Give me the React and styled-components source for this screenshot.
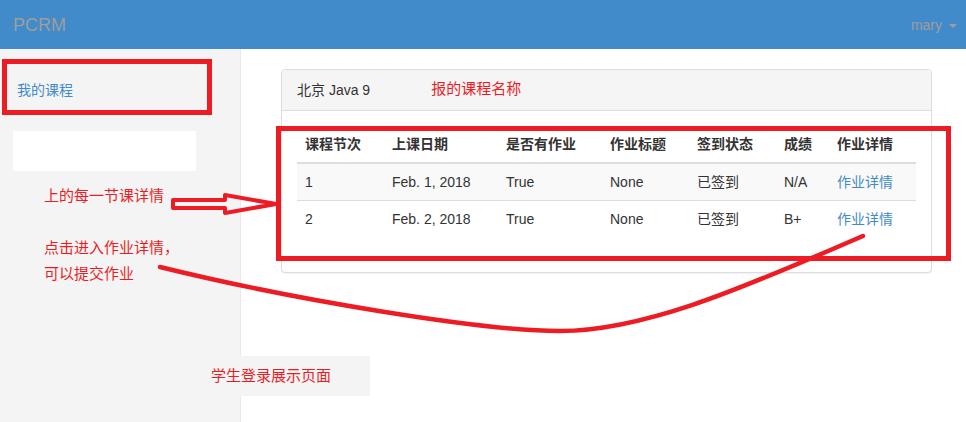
import React from "react"
import styled, { createGlobalStyle } from "styled-components"

const GlobalStyle = createGlobalStyle`
  html, body {
    margin: 0;
    padding: 0;
    background: #fff;
    font-family: "Liberation Sans", "Noto Sans CJK SC", sans-serif;
    font-size: 14px;
    line-height: 20px;
    color: #333;
  }
`

const Page = styled.div`
  position: relative;
  width: 100%;
  height: 100vh;
  min-height: 422px;
  display: flex;
  flex-direction: column;
  overflow: hidden;
`

const Navbar = styled.nav`
  height: 49px;
  flex-shrink: 0;
  background-color: #428bca;
  display: flex;
  align-items: center;
  justify-content: space-between;
  padding: 0 9px 0 13px;
`

const Brand = styled.span`
  font-size: 18px;
  color: #9d9d9d;
`

const UserMenu = styled.span`
  display: flex;
  align-items: center;
  gap: 7px;
  color: #9d9d9d;
  font-size: 14px;
`

const Caret = styled.span`
  width: 0;
  height: 0;
  border-left: 4px solid transparent;
  border-right: 4px solid transparent;
  border-top: 4px solid #9d9d9d;
  margin-top: 2px;
`

const Body = styled.div`
  flex: 1;
  display: flex;
`

const Sidebar = styled.aside`
  width: 240px;
  flex-shrink: 0;
  background: #f4f4f4;
  border-right: 1px solid #eaeaea;
  padding-top: 20px;
`

const NavItem = styled.a`
  display: block;
  padding: 11px 17px;
  color: #428bca;
  text-decoration: none;
  font-size: 14px;
`

const BlankBox = styled.div`
  margin: 20px 0 0 13px;
  width: 183px;
  height: 40px;
  background: #fff;
`

const Notes = styled.div`
  margin: 12px 0 0 44px;
  display: flex;
  flex-direction: column;
`

const Note = styled.div`
  color: #ed1c24;
  font-size: 15px;
  line-height: 26px;
  margin-top: ${p => p.top || 0}px;
`

const Main = styled.main`
  flex: 1;
  min-width: 0;
  padding: 20px 34px 0 40px;
`

const Panel = styled.section`
  border: 1px solid #ddd;
  border-radius: 4px;
  background: #fff;
  box-shadow: 0 1px 1px rgba(0, 0, 0, 0.05);
`

const PanelHeading = styled.div`
  display: flex;
  align-items: center;
  padding: 10px 15px;
  background: #f5f5f5;
  border-bottom: 1px solid #ddd;
  border-radius: 3px 3px 0 0;
`

const HeadingNote = styled.span`
  color: #ed1c24;
  font-size: 15px;
  margin: -3px 0 0 61px;
`

const PanelBody = styled.div`
  padding: 15px;
`

const Table = styled.table`
  width: 100%;
  table-layout: fixed;
  border-collapse: collapse;
  margin-bottom: 20px;
`

const Th = styled.th`
  text-align: left;
  font-weight: bold;
  padding: 8px;
  border-bottom: 2px solid #ddd;
  width: ${p => p.w - 16}px;
  white-space: nowrap;
`

const Tr = styled.tr`
  background: ${p => (p.striped ? "#f9f9f9" : "#fff")};
`

const Td = styled.td`
  padding: 8px;
  border-top: 1px solid #ddd;
  white-space: nowrap;
`

const DetailLink = styled.a`
  color: #428bca;
  text-decoration: none;
`

const PageLabel = styled.div`
  position: absolute;
  left: 200px;
  top: 356px;
  width: 159px;
  height: 40px;
  padding-left: 11px;
  line-height: 40px;
  background: #f4f4f4;
  color: #ed1c24;
  font-size: 15px;
`

const Overlay = styled.svg`
  position: absolute;
  left: 0;
  top: 0;
  pointer-events: none;
`

const columns = [
  { title: "课程节次", w: 87 },
  { title: "上课日期", w: 114 },
  { title: "是否有作业", w: 104 },
  { title: "作业标题", w: 87 },
  { title: "签到状态", w: 87 },
  { title: "成绩", w: 53 },
  { title: "作业详情", w: 87 },
]

const records = [
  { no: 1, date: "Feb. 1, 2018", hw: "True", title: "None", sign: "已签到", score: "N/A" },
  { no: 2, date: "Feb. 2, 2018", hw: "True", title: "None", sign: "已签到", score: "B+" },
]

const App = () => {
  return (
    <Page>
      <GlobalStyle />
      <Navbar>
        <Brand>PCRM</Brand>
        <UserMenu>
          mary <Caret />
        </UserMenu>
      </Navbar>
      <Body>
        <Sidebar>
          <NavItem href="#">我的课程</NavItem>
          <BlankBox />
          <Notes>
            <Note>上的每一节课详情</Note>
            <Note top={26}>点击进入作业详情，</Note>
            <Note>可以提交作业</Note>
          </Notes>
        </Sidebar>
        <Main>
          <Panel>
            <PanelHeading>
              北京 Java 9
              <HeadingNote>报的课程名称</HeadingNote>
            </PanelHeading>
            <PanelBody>
              <Table>
                <thead>
                  <tr>
                    {columns.map(c => (
                      <Th key={c.title} w={c.w}>{c.title}</Th>
                    ))}
                  </tr>
                </thead>
                <tbody>
                  {records.map((r, i) => (
                    <Tr key={r.no} striped={i % 2 === 0}>
                      <Td>{r.no}</Td>
                      <Td>{r.date}</Td>
                      <Td>{r.hw}</Td>
                      <Td>{r.title}</Td>
                      <Td>{r.sign}</Td>
                      <Td>{r.score}</Td>
                      <Td><DetailLink href="#">作业详情</DetailLink></Td>
                    </Tr>
                  ))}
                </tbody>
              </Table>
            </PanelBody>
          </Panel>
        </Main>
      </Body>

      <PageLabel>学生登录展示页面</PageLabel>

      <Overlay width="966" height="422" viewBox="0 0 966 422">
        <g fill="none" stroke="#ed1c24">
          <rect x="4.5" y="61.5" width="205" height="51" strokeWidth="5" />
          <rect x="278.5" y="128.5" width="670" height="130" strokeWidth="5" />
          <polygon
            points="173,200 225,200 225,195 276,204 225,213 225,208 173,208"
            strokeWidth="4"
            strokeLinejoin="round"
          />
          <path
            d="M160 267 C290 299 480 331 560 331 C650 331 760 280 863 236"
            strokeWidth="4.5"
            strokeLinecap="round"
          />
        </g>
      </Overlay>
    </Page>
  )
}

export default App
